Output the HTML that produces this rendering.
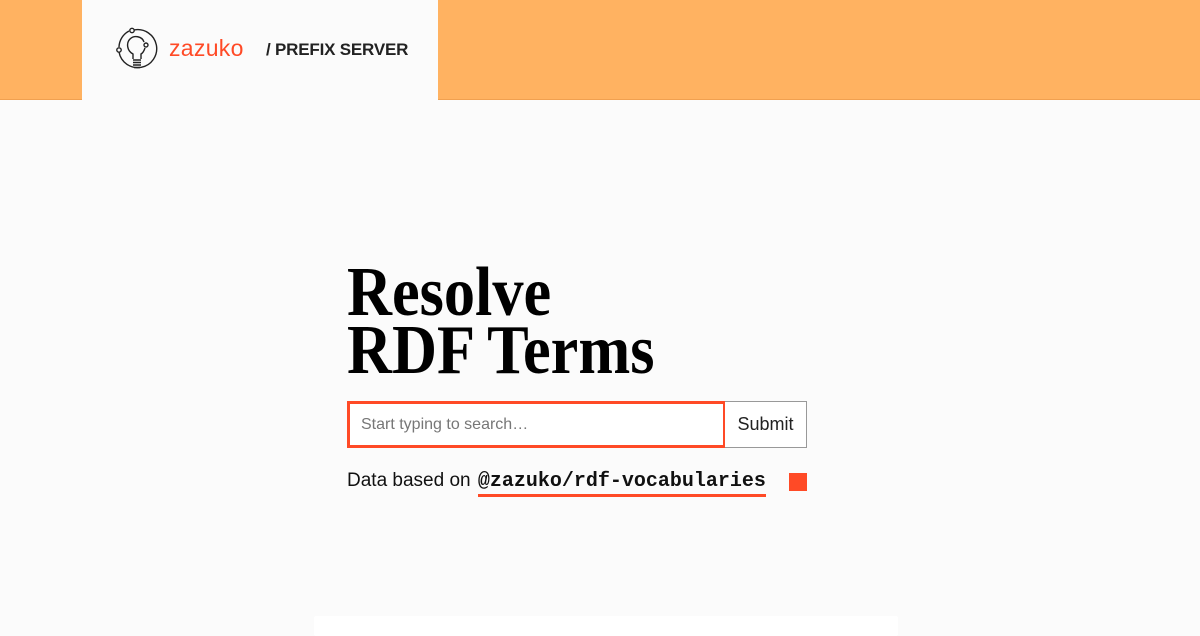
<!DOCTYPE html>
<html><head><meta charset="utf-8"><style>
*{margin:0;padding:0;box-sizing:border-box}
body{width:1200px;height:630px;background:#fbfbfb;position:relative;overflow:hidden;font-family:"Liberation Sans",sans-serif}
.top{position:absolute;left:0;top:0;width:1200px;height:100px;background:#ffb261;border-bottom:1px solid #f0a050}
.logo{position:absolute;left:82px;top:0;width:356px;height:101px;background:#fbfbfb}
.zz{position:absolute;left:169px;top:35px;font-family:"Liberation Sans",sans-serif;font-size:23px;color:#ff4a26;letter-spacing:0.3px;font-weight:normal}
.ps{position:absolute;left:266px;top:40px;font-size:17px;font-weight:bold;color:#222;letter-spacing:-0.2px}
h1{position:absolute;left:347px;top:264px;font-family:"Liberation Serif",serif;font-weight:bold;font-size:70px;line-height:58px;color:#000;transform:scaleX(0.89);transform-origin:left top;white-space:nowrap}
.inp{position:absolute;left:347px;top:401px;width:379px;height:47px;border:3px solid #ff4a26;background:#fff;font-size:16px;color:#777;padding:12px 0 0 11px}
.btn{position:absolute;left:725px;top:401px;width:82px;height:47px;border:1px solid #999;border-left:none;background:#fff;font-size:18px;color:#222;text-align:center;padding-top:12px}
.data{position:absolute;left:347px;top:470px;font-size:19px;color:#111}
.data code{font-family:"Liberation Mono",monospace;font-weight:bold;font-size:20px;border-bottom:3px solid #ff4a26;padding-bottom:1px;margin-left:2px}
.sq{position:absolute;left:789px;top:473px;width:18px;height:18px;background:#ff4a26}
.bot{position:absolute;left:314px;top:616px;width:584px;height:20px;background:#fff;border-radius:2px}
</style></head><body>
<div class="top"></div>
<div class="logo">
<svg style="position:absolute;left:33px;top:26px" width="46" height="46" viewBox="0 0 46 46" fill="none" stroke="#222" stroke-width="1.4">
<path d="M19 4 A19 19 0 1 1 4 26"/>
<path d="M14 5 A19 19 0 0 0 4 21"/>
<circle cx="17" cy="4.5" r="2.2"/>
<circle cx="4" cy="24" r="2.2"/>
<circle cx="31" cy="19" r="2"/>
<path d="M18 33 L18 28 C12 25 11 17 15 13 C19 9 27 10 29 16"/>
<path d="M26 33 L26 28 C28 27 29 25 30 22"/>
<path d="M18 34 H26 M18 36.5 H26 M18 39 H26 M19 41.5 H25"/>
</svg>
</div>
<div class="zz">zazuko</div>
<div class="ps">/ PREFIX SERVER</div>
<h1>Resolve<br>RDF Terms</h1>
<div class="inp">Start typing to search…</div>
<div class="btn">Submit</div>
<div class="data">Data based on <code>@zazuko/rdf-vocabularies</code></div>
<div class="sq"></div>
<div class="bot"></div>
</body></html>
